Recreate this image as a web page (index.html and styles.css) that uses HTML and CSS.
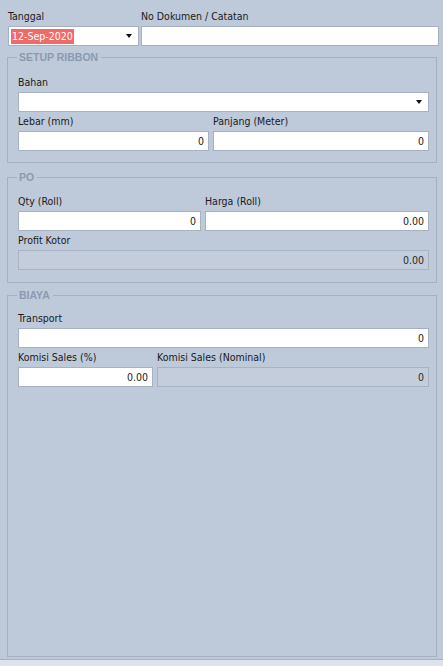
FILE: index.html
```html
<!DOCTYPE html>
<html>
<head>
<meta charset="utf-8">
<link rel="stylesheet" href="styles.css">
</head>
<body>
<div class="page">
  <div class="toprow">
    <div class="field f-date">
      <div class="label">Tanggal</div>
      <div class="input combo"><span class="sel">12-Sep-2020</span><span class="arrow"></span></div>
    </div>
    <div class="field f-doc">
      <div class="label">No Dokumen / Catatan</div>
      <div class="input"></div>
    </div>
  </div>

  <fieldset class="group g1">
    <legend>SETUP RIBBON</legend>
    <div class="field">
      <div class="label">Bahan</div>
      <div class="input combo"><span></span><span class="arrow"></span></div>
    </div>
    <div class="row">
      <div class="field f-lebar">
        <div class="label">Lebar (mm)</div>
        <div class="input num">0</div>
      </div>
      <div class="field grow">
        <div class="label">Panjang (Meter)</div>
        <div class="input num">0</div>
      </div>
    </div>
  </fieldset>

  <fieldset class="group g2">
    <legend>PO</legend>
    <div class="row">
      <div class="field f-qty">
        <div class="label">Qty (Roll)</div>
        <div class="input num">0</div>
      </div>
      <div class="field grow">
        <div class="label">Harga (Roll)</div>
        <div class="input num">0.00</div>
      </div>
    </div>
    <div class="field">
      <div class="label">Profit Kotor</div>
      <div class="input num disabled">0.00</div>
    </div>
  </fieldset>

  <fieldset class="group g3">
    <legend>BIAYA</legend>
    <div class="field">
      <div class="label">Transport</div>
      <div class="input num">0</div>
    </div>
    <div class="row">
      <div class="field f-komisi">
        <div class="label">Komisi Sales (%)</div>
        <div class="input num">0.00</div>
      </div>
      <div class="field grow">
        <div class="label">Komisi Sales (Nominal)</div>
        <div class="input num disabled">0</div>
      </div>
    </div>
  </fieldset>
</div>
<div class="bottomstrip"></div>
</body>
</html>
```
FILE: styles.css
```css
html, body {
  margin: 0;
  padding: 0;
}
body {
  width: 443px;
  height: 666px;
  background: #bec9d9;
  font-family: "DejaVu Sans Condensed", "Liberation Sans", Arial, sans-serif;
  font-size: 10.5px;
  color: #1b1b1b;
  display: flex;
  flex-direction: column;
  overflow: hidden;
}
.page {
  flex: 1;
  display: flex;
  flex-direction: column;
  padding: 9px 4px 0 7px;
}
.toprow {
  display: flex;
  gap: 2px;
  padding-left: 1px;
}
.f-date { width: 131px; }
.f-doc { flex: 1; }
.field {
  display: flex;
  flex-direction: column;
  margin-top: 2px;
}
.toprow .field { margin-top: 0; }
.row .field { margin-top: 0; }
.row {
  display: flex;
  gap: 4px;
  margin-top: 2px;
}
.grow { flex: 1; }
.label {
  height: 14px;
  line-height: 14px;
  margin-bottom: 3px;
  white-space: nowrap;
}
.input {
  height: 20px;
  box-sizing: border-box;
  background: #ffffff;
  border: 1px solid #a6b2c3;
  display: flex;
  align-items: center;
  padding: 0 4px 0 2px;
}
.num { justify-content: flex-end; }
.combo { justify-content: space-between; padding-right: 6px; }
.sel {
  background: #f06a6a;
  color: #ffffff;
  line-height: 15px;
  padding: 0 1px;
}
.arrow {
  width: 0;
  height: 0;
  border-left: 3.5px solid transparent;
  border-right: 3.5px solid transparent;
  border-top: 4px solid #111;
}
.disabled {
  background: #c3cddb;
  border-color: #a7b2c3;
  color: #2a2a2a;
}
.group {
  margin: 5px 0 0 0;
  border: 1px solid #a4b1c4;
  padding: 10px 7px 11px 10px;
  width: 430px;
  box-sizing: border-box;
}
.group legend {
  font-weight: bold;
  color: #8c9ab0;
  font-family: "Liberation Sans", Arial, sans-serif;
  font-size: 10.5px;
  line-height: 12px;
  padding: 0 3px 0 2px;
  margin-left: -1px;
}
.g2 { margin-top: 8px; padding-top: 9px; padding-bottom: 12px; }
.g3 { margin-top: 6px; padding-top: 8px; flex: 1; margin-bottom: 2px; }
.f-lebar { width: 191px; }
.f-qty { width: 183px; }
.f-komisi { width: 135px; }
.bottomstrip {
  height: 6px;
  background: #dde3ec;
  border-top: 1px solid #a6b2c4;
}
```
